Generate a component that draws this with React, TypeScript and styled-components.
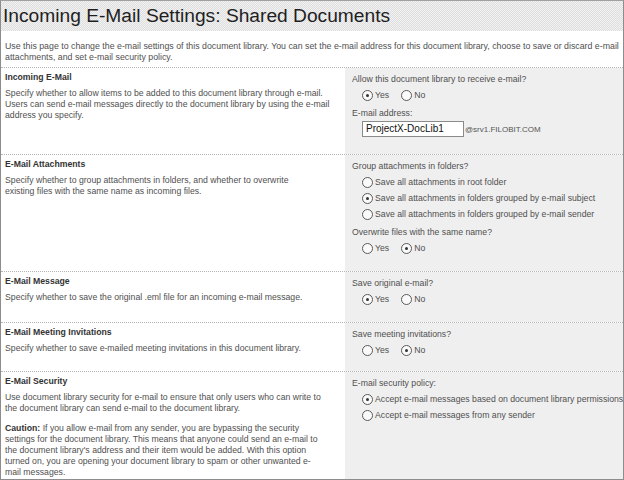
import React from "react";
import styled, { createGlobalStyle } from "styled-components";

const Global = createGlobalStyle`
  html, body { margin: 0; padding: 0; background: #fff; }
  body { font-family: "Liberation Sans", Arial, sans-serif; }
`;

const Frame = styled.div`
  width: 624px;
  height: 480px;
  box-sizing: border-box;
  border: 1px solid #8d8d8d;
  border-top-color: #a0a0a0;
  background: #fff;
  overflow: hidden;
  display: flex;
  flex-direction: column;
  font-family: "Liberation Sans", Arial, sans-serif;
  font-size: 8.7px;
  color: #505050;
`;

const TitleBar = styled.div`
  height: 30px;
  flex: none;
  display: flex;
  align-items: center;
  padding-left: 2px;
  background: repeating-conic-gradient(#dedede 0 25%, #f2f2f2 0 50%) 0 0 / 2px 2px;
`;

const Title = styled.h1`
  margin: 0;
  font-family: "Liberation Sans", Arial, sans-serif;
  font-weight: normal;
  font-size: 19.2px;
  color: #1e1e1e;
  white-space: nowrap;
`;

const Intro = styled.p`
  margin: 0;
  padding: 10px 4px 4px;
  line-height: 11px;
  font-size: 8.8px;
  white-space: nowrap;
  flex: none;
`;

const Section = styled.section<{ $h?: number }>`
  display: grid;
  grid-template-columns: 344px 1fr;
  border-top: 1px dotted #b4b4b4;
  flex: ${(p) => (p.$h ? `0 0 ${p.$h}px` : "1 1 auto")};
  box-sizing: border-box;
  min-height: 0;
`;

const Info = styled.div`
  padding: 4px 4px 0 4px;
`;

const Heading = styled.h3`
  margin: 0 0 5px;
  font-size: 8.7px;
  font-weight: bold;
  color: #333;
  line-height: 11px;
`;

const Desc = styled.p`
  margin: 0 0 9px;
  line-height: 11px;
  white-space: nowrap;
  & b { color: #333; }
`;

const Controls = styled.div`
  background: #efefef;
  padding: 4px 0 0 7px;
  display: flex;
  flex-direction: column;
  align-items: flex-start;
`;

const Prompt = styled.div`
  line-height: 15px;
  height: 15px;
  white-space: nowrap;
`;

const RadioGroup = styled.div`
  display: flex;
  flex-direction: column;
  margin-bottom: 3px;
`;

const RadioRow = styled.div`
  display: flex;
  gap: 12px;
  padding-left: 10px;
  height: 16px;
  align-items: center;
`;

const Option = styled.label`
  display: inline-flex;
  align-items: center;
  gap: 2px;
  white-space: nowrap;
`;

const Circle = styled.span<{ $on?: boolean }>`
  width: 9px;
  height: 9px;
  border: 1px solid #5a5a5a;
  border-radius: 50%;
  background: #fafafa;
  display: inline-flex;
  align-items: center;
  justify-content: center;
  &::after {
    content: "";
    width: 3px;
    height: 3px;
    border-radius: 50%;
    background: ${(p) => (p.$on ? "#333" : "transparent")};
  }
`;

const AddressRow = styled.div`
  display: flex;
  align-items: center;
  padding-left: 10px;
  gap: 1px;
`;

const TextBox = styled.div`
  width: 97px;
  height: 14px;
  border: 1px solid #8a8a8a;
  background: #fff;
  font-size: 10px;
  line-height: 14px;
  color: #111;
  padding-left: 3px;
  box-sizing: content-box;
`;

const Domain = styled.span`
  font-size: 8px;
  color: #555;
`;

const Radio = ({ on, children }: { on?: boolean; children: React.ReactNode }) => (
  <Option>
    <Circle $on={on} />
    {children}
  </Option>
);

export default function App() {
  return (
    <>
      <Global />
      <Frame>
        <TitleBar>
          <Title>Incoming E-Mail Settings: Shared Documents</Title>
        </TitleBar>
        <Intro>
          Use this page to change the e-mail settings of this document library. You can set the e-mail address for this document library, choose to save or discard e-mail
          <br />
          attachments, and set e-mail security policy.
        </Intro>

        <Section $h={87}>
          <Info>
            <Heading>Incoming E-Mail</Heading>
            <Desc>
              Specify whether to allow items to be added to this document library through e-mail.
              <br />
              Users can send e-mail messages directly to the document library by using the e-mail
              <br />
              address you specify.
            </Desc>
          </Info>
          <Controls>
            <Prompt>Allow this document library to receive e-mail?</Prompt>
            <RadioGroup>
              <RadioRow>
                <Radio on>Yes</Radio>
                <Radio>No</Radio>
              </RadioRow>
            </RadioGroup>
            <Prompt>E-mail address:</Prompt>
            <AddressRow>
              <TextBox>ProjectX-DocLib1</TextBox>
              <Domain>@srv1.FILOBIT.COM</Domain>
            </AddressRow>
          </Controls>
        </Section>

        <Section $h={117}>
          <Info>
            <Heading>E-Mail Attachments</Heading>
            <Desc>
              Specify whether to group attachments in folders, and whether to overwrite
              <br />
              existing files with the same name as incoming files.
            </Desc>
          </Info>
          <Controls>
            <Prompt>Group attachments in folders?</Prompt>
            <RadioGroup>
              <RadioRow>
                <Radio>Save all attachments in root folder</Radio>
              </RadioRow>
              <RadioRow>
                <Radio on>Save all attachments in folders grouped by e-mail subject</Radio>
              </RadioRow>
              <RadioRow>
                <Radio>Save all attachments in folders grouped by e-mail sender</Radio>
              </RadioRow>
            </RadioGroup>
            <Prompt>Overwrite files with the same name?</Prompt>
            <RadioGroup>
              <RadioRow>
                <Radio>Yes</Radio>
                <Radio on>No</Radio>
              </RadioRow>
            </RadioGroup>
          </Controls>
        </Section>

        <Section $h={51}>
          <Info>
            <Heading>E-Mail Message</Heading>
            <Desc>Specify whether to save the original .eml file for an incoming e-mail message.</Desc>
          </Info>
          <Controls>
            <Prompt>Save original e-mail?</Prompt>
            <RadioGroup>
              <RadioRow>
                <Radio on>Yes</Radio>
                <Radio>No</Radio>
              </RadioRow>
            </RadioGroup>
          </Controls>
        </Section>

        <Section $h={49}>
          <Info>
            <Heading>E-Mail Meeting Invitations</Heading>
            <Desc>Specify whether to save e-mailed meeting invitations in this document library.</Desc>
          </Info>
          <Controls>
            <Prompt>Save meeting invitations?</Prompt>
            <RadioGroup>
              <RadioRow>
                <Radio>Yes</Radio>
                <Radio on>No</Radio>
              </RadioRow>
            </RadioGroup>
          </Controls>
        </Section>

        <Section>
          <Info>
            <Heading>E-Mail Security</Heading>
            <Desc>
              Use document library security for e-mail to ensure that only users who can write to
              <br />
              the document library can send e-mail to the document library.
            </Desc>
            <Desc>
              <b>Caution:</b> If you allow e-mail from any sender, you are bypassing the security
              <br />
              settings for the document library. This means that anyone could send an e-mail to
              <br />
              the document library's address and their item would be added. With this option
              <br />
              turned on, you are opening your document library to spam or other unwanted e-
              <br />
              mail messages.
            </Desc>
          </Info>
          <Controls>
            <Prompt>E-mail security policy:</Prompt>
            <RadioGroup>
              <RadioRow>
                <Radio on>Accept e-mail messages based on document library permissions</Radio>
              </RadioRow>
              <RadioRow>
                <Radio>Accept e-mail messages from any sender</Radio>
              </RadioRow>
            </RadioGroup>
          </Controls>
        </Section>
      </Frame>
    </>
  );
}
